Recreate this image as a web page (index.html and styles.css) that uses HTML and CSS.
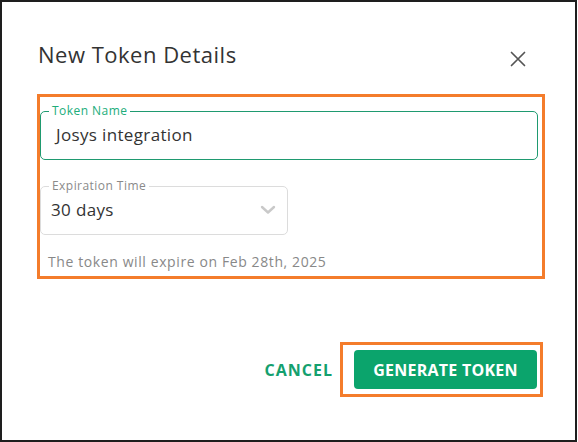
FILE: index.html
```html
<!DOCTYPE html>
<html lang="en">
<head>
<meta charset="utf-8">
<title>New Token Details</title>
<link rel="stylesheet" href="styles.css">
</head>
<body>
<div class="dialog">
  <div class="header">
    <h2 class="title">New Token Details</h2>
    <button class="close" aria-label="Close">
      <svg width="24" height="24" viewBox="0 0 24 24"><path d="M5.5 5.5 L18.5 18.5 M18.5 5.5 L5.5 18.5" stroke="#555" stroke-width="1.7" stroke-linecap="round" fill="none"/></svg>
    </button>
  </div>
  <div class="form highlight">
    <fieldset class="field field-token">
      <legend class="legend legend-active">Token Name</legend>
      <div class="value value-token">Josys integration</div>
    </fieldset>
    <fieldset class="field field-exp">
      <legend class="legend">Expiration Time</legend>
      <div class="select-row">
        <span class="value value-exp">30 days</span>
        <svg class="chevron" width="16" height="10" viewBox="0 0 16 10"><path d="M2 2 L8 7.5 L14 2" stroke="#c9c9c9" stroke-width="2.4" stroke-linecap="round" stroke-linejoin="round" fill="none"/></svg>
      </div>
    </fieldset>
    <p class="help">The token will expire on Feb 28th, 2025</p>
  </div>
  <div class="footer">
    <button class="btn-text">CANCEL</button>
    <div class="highlight btn-wrap">
      <button class="btn-primary">GENERATE TOKEN</button>
    </div>
  </div>
</div>
</body>
</html>
```

FILE: styles.css
```css
* { box-sizing: border-box; }
html, body { margin: 0; padding: 0; background: #fff; }
body { font-family: "Open Sans", "Noto Sans", sans-serif; color: #333; }

.dialog {
  width: 577px;
  height: 442px;
  border: 2px solid #1e1e1e;
  background: #fff;
  display: flex;
  flex-direction: column;
}

.header {
  display: flex;
  justify-content: space-between;
  align-items: flex-start;
  padding: 38px 45px 0 36px;
}
.title {
  margin: 0;
  font-size: 22px;
  letter-spacing: 0.5px;
  line-height: 28px;
  font-weight: 400;
  color: #333;
}
.close {
  margin-top: 7px;
  width: 24px;
  height: 24px;
  padding: 0;
  border: 0;
  background: none;
  display: block;
}
.close svg { display: block; }

.highlight { border: 3px solid #f47c2b; }

.form {
  margin: 23px 0 0 35px;
  width: 508px;
  height: 185px;
  display: flex;
  flex-direction: column;
  align-items: flex-start;
}

.field {
  margin: 7px 0 0 0;
  padding: 5px 0 12px 0;
  border: 1px solid #dcdcdc;
  border-radius: 5px;
  min-width: 0;
}
.field-token { width: 498px; border-color: #1f9a70; }
.field-exp { width: 248px; margin-top: 19px; }

.legend {
  margin-left: 8px;
  padding: 0 3px;
  font-size: 12px;
  letter-spacing: 0.45px;
  line-height: 14px;
  color: #8a8a8a;
}
.legend-active { color: #21ad7b; }

.value {
  font-size: 17px;
  letter-spacing: 0.35px;
  line-height: 24px;
  color: #333;
}
.value-token { padding-left: 15px; }

.select-row {
  display: flex;
  align-items: center;
  justify-content: space-between;
  padding: 0 11px 0 10px;
}
.chevron { display: block; }

.help {
  margin: 18px 0 0 8px;
  font-size: 14px;
  letter-spacing: 0.6px;
  line-height: 18px;
  color: #888;
}

.footer {
  margin-top: 63px;
  display: flex;
  justify-content: flex-end;
  align-items: center;
  padding-right: 32px;
}
.btn-text {
  border: 0;
  background: none;
  padding: 0;
  margin-right: 7px;
  font-family: inherit;
  font-size: 16px;
  letter-spacing: 1px;
  font-weight: 700;
  color: #14a06e;
  line-height: 20px;
}
.btn-wrap { padding: 5px 3px 5px 11px; }
.btn-primary {
  display: block;
  width: 183px;
  height: 39px;
  border: 0;
  border-radius: 4px;
  background: #0ba46c;
  color: #fff;
  font-family: inherit;
  font-size: 16px;
  letter-spacing: 0.25px;
  font-weight: 700;
}
```
